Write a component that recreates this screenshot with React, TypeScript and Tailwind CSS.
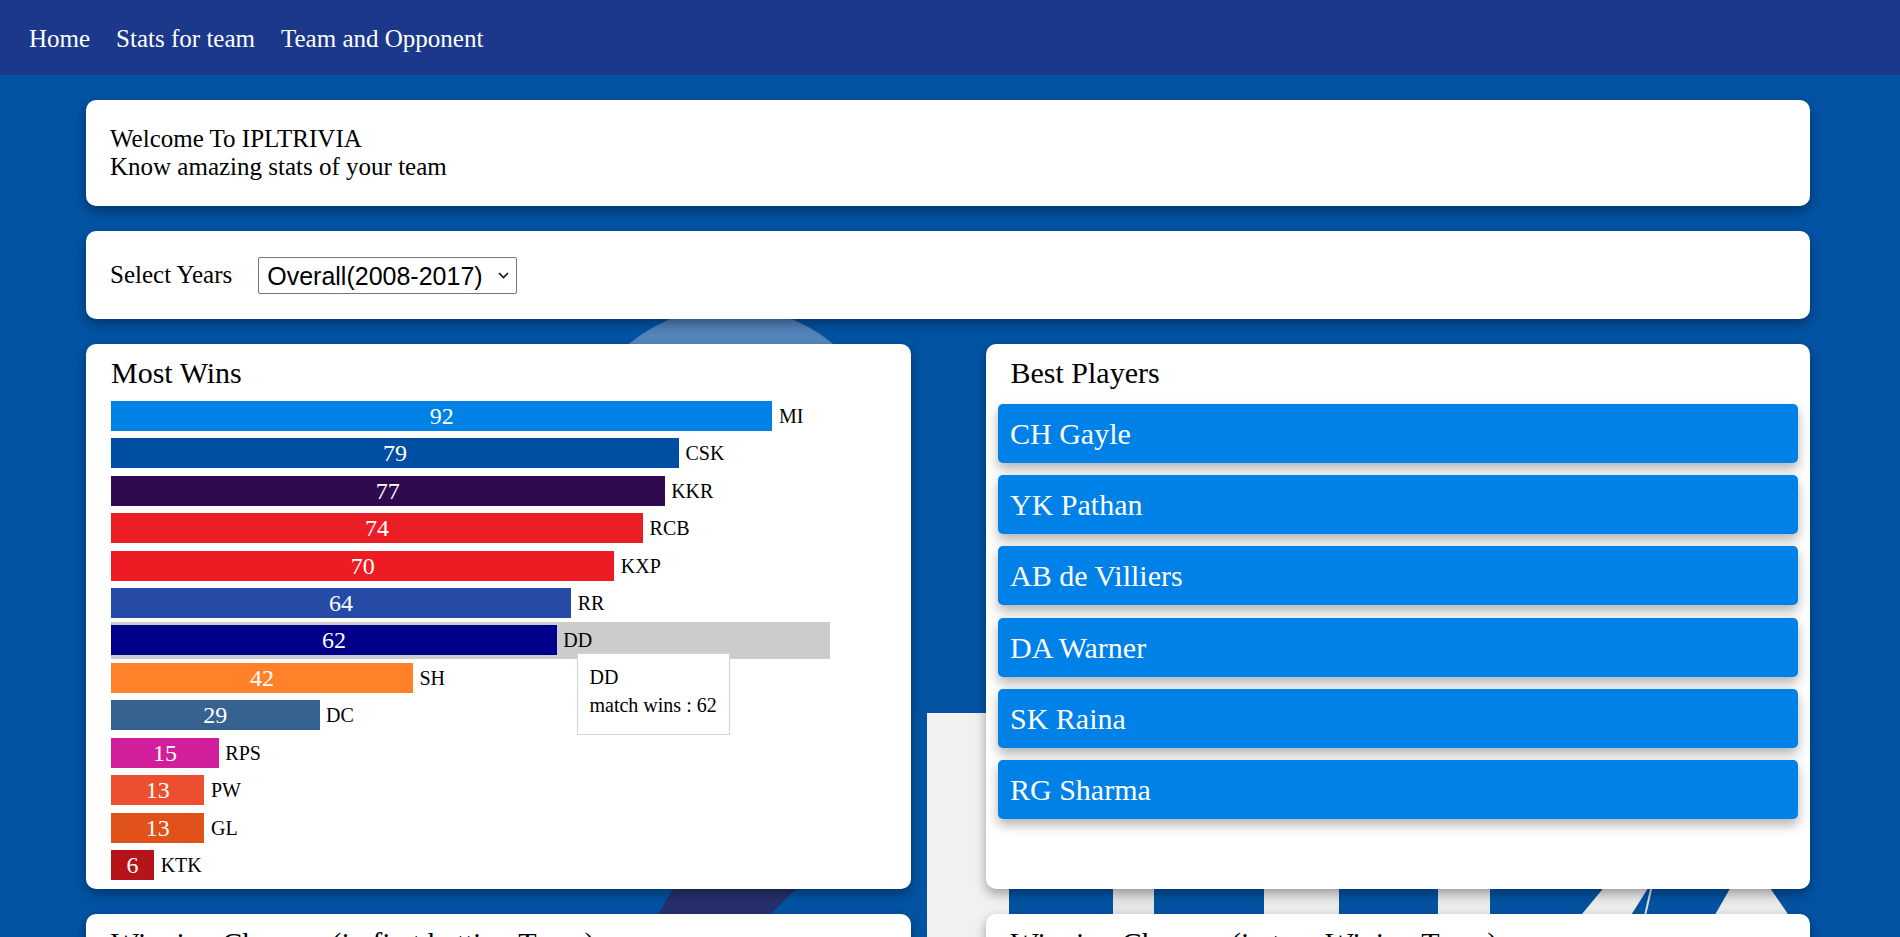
import React from "react";

const teams = [
    { name: "MI", wins: 92, color: "#0081e6" },
    { name: "CSK", wins: 79, color: "#004ea2" },
    { name: "KKR", wins: 77, color: "#2f0a4f" },
    { name: "RCB", wins: 74, color: "#ed1d25" },
    { name: "KXP", wins: 70, color: "#ed1c24" },
    { name: "RR", wins: 64, color: "#264ba6" },
    { name: "DD", wins: 62, color: "#00008b" },
    { name: "SH", wins: 42, color: "#ff822a" },
    { name: "DC", wins: 29, color: "#35628f" },
    { name: "RPS", wins: 15, color: "#d11e9b" },
    { name: "PW", wins: 13, color: "#eb4f30" },
    { name: "GL", wins: 13, color: "#e0521a" },
    { name: "KTK", wins: 6, color: "#b5151a" },
];

const players = ["CH Gayle", "YK Pathan", "AB de Villiers", "DA Warner", "SK Raina", "RG Sharma"];

const card = "bg-white rounded-[10px] shadow-[0_5px_12px_rgba(0,0,0,0.35)]";

// faded IPL logo behind the page
const LogoBackdrop = () => (
    <svg className="absolute inset-0 pointer-events-none" width="1900" height="937" viewBox="0 0 1900 937">
        <defs>
            <linearGradient id="ball" x1="0" y1="0" x2="0" y2="1">
                <stop offset="0" stopColor="#4f80b8" />
                <stop offset="0.2" stopColor="#5a8bc1" />
            </linearGradient>
        </defs>
        <circle cx="731" cy="467" r="160" fill="url(#ball)" />
        <polygon points="673,889 796,889 768,916 657,916" fill="#27306c" />
        <rect x="927" y="713" width="82" height="230" fill="#f1f1f1" />
        <rect x="1113" y="870" width="41" height="60" fill="#e6e6e6" />
        <rect x="1264" y="870" width="75" height="60" fill="#ececec" />
        <rect x="1438" y="870" width="52" height="60" fill="#ececec" />
        <polygon points="1606,885 1650,885 1628,920 1577,920" fill="#ececec" />
        <line x1="1652" y1="885" x2="1644" y2="920" stroke="#e0e0e0" strokeWidth="2" />
        <polygon points="1732,885 1768,885 1792,920 1712,920" fill="#ececec" />
    </svg>
);

const MostWins = () => (
    <div className={`${card} relative pt-[11px] pl-[25px]`}>
        <h3 className="text-[30px] leading-[35px] text-black">Most Wins</h3>
        <div className="mt-[7px]">
            {teams.map((team) => (
                <div key={team.name} className={`flex items-center h-[37.46px] w-[719px] ${team.name === "DD" ? "bg-[#cccccc]" : ""}`}>
                    <div className="h-[30px] flex items-center justify-center text-white text-[24px]" style={{ width: team.wins * 7.19, backgroundColor: team.color }}>
                        {team.wins}
                    </div>
                    <span className="ml-[6.5px] text-[20px] text-black">{team.name}</span>
                </div>
            ))}
        </div>
        <div className="absolute left-[490.5px] top-[309px] bg-white border border-[#d4d4d4] p-[12px] whitespace-nowrap text-[20px] leading-[23px] text-black">
            <p>DD</p>
            <ul>
                <li className="py-[5px]">match wins : 62</li>
            </ul>
        </div>
    </div>
);

const BestPlayers = () => (
    <div className={`${card} pt-[11px]`}>
        <h3 className="pl-[25px] text-[30px] leading-[35px] text-black">Best Players</h3>
        <div className="mt-[13.5px] px-[12.5px] flex flex-col gap-[12.4px]">
            {players.map((player) => (
                <div key={player} className="h-[59px] flex items-center pl-[12px] rounded-[5px] bg-[#0081e8] text-white text-[30px] shadow-[0_6px_12px_rgba(0,0,0,0.3)]">
                    {player}
                </div>
            ))}
        </div>
    </div>
);

export default function App() {
    return (
        <div className="relative h-[937px] overflow-hidden bg-[#0253a3] font-['Liberation_Serif','Times_New_Roman',serif]">
            <LogoBackdrop />
            <nav className="relative h-[75px] bg-[#1b388b] flex gap-[26px] pl-[29px] pt-[20px] text-[25px] text-white">
                <a href="#">Home</a>
                <a href="#">Stats for team</a>
                <a href="#">Team and Opponent</a>
            </nav>
            <main className="relative w-[1724px] ml-[86px] pt-[25px] flex flex-col gap-[25px]">
                <div className={`${card} pt-[25px] pb-[25px] pl-[24px] text-[25px] leading-[28px] text-black`}>
                    <p>Welcome To IPLTRIVIA</p>
                    <p>Know amazing stats of your team</p>
                </div>
                <div className={`${card} h-[88px] flex items-center pl-[24px] text-black`}>
                    <span className="text-[25px] mr-[26px]">Select Years</span>
                    <div className="relative">
                        <select className="appearance-none w-[259px] h-[37px] border border-[#767676] rounded-[2px] bg-white pl-[8px] text-[25px] text-black font-['Liberation_Sans',Arial,sans-serif]" defaultValue="overall">
                            <option value="overall">Overall(2008-2017)</option>
                            <option value="2017">2017</option>
                            <option value="2016">2016</option>
                        </select>
                        <svg className="absolute right-[8px] top-[15px] pointer-events-none" width="11" height="7" viewBox="0 0 11 7">
                            <path d="M1 1l4.5 4.5L10 1" fill="none" stroke="#111" strokeWidth="1.6" />
                        </svg>
                    </div>
                </div>
                <div className="grid grid-cols-2 gap-[75px] h-[545px]">
                    <MostWins />
                    <BestPlayers />
                </div>
                <div className="grid grid-cols-2 gap-[75px] h-[400px]">
                    <div className={`${card} pt-[11px] pl-[25px]`}>
                        <h3 className="text-[30px] leading-[35px] text-black">Winning Chances (in first batting Team)</h3>
                    </div>
                    <div className={`${card} pt-[11px] pl-[25px]`}>
                        <h3 className="text-[30px] leading-[35px] text-black">Winning Chances (in toss Wining Team)</h3>
                    </div>
                </div>
            </main>
        </div>
    );
}
